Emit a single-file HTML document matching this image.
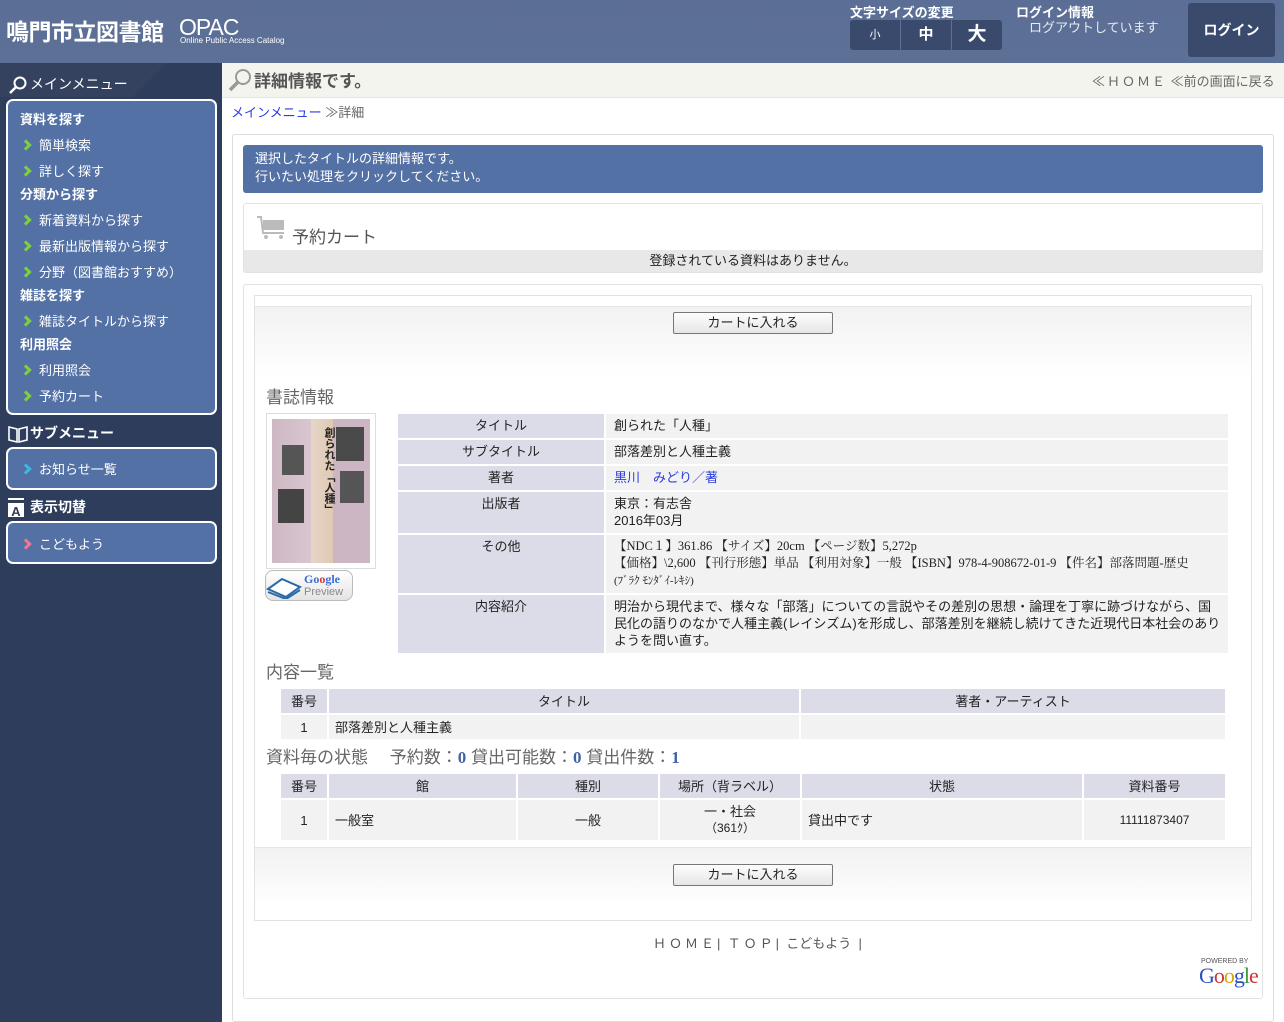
<!DOCTYPE html>
<html><head><meta charset="utf-8"><style>
*{margin:0;padding:0;box-sizing:border-box}
body{width:1284px;height:1022px;position:relative;overflow:hidden;background:#fff;font-family:"Liberation Sans","Noto Sans CJK JP",sans-serif;font-size:13px;color:#222}
.a{position:absolute}
#hdr{left:0;top:0;width:1284px;height:63px;background:linear-gradient(#5b6e95,#5d7096)}
#side{left:0;top:63px;width:222px;height:959px;background:#2f3d5d}
.box{position:absolute;left:6px;width:211px;background:#5471a5;border:2px solid #fff;border-radius:7px}
.it{position:absolute;left:12px;color:#fff;font-size:13px;white-space:nowrap;line-height:17px}
.it b{font-weight:bold}
.ch{display:inline-block;width:8px;height:8px;border-top:3px solid #7dd13b;border-right:3px solid #7dd13b;transform:rotate(45deg);margin:0 9px 1px 2px}
.sh{position:absolute;left:8px;color:#fff;font-weight:bold;font-size:14px}
table{border-collapse:separate;border-spacing:2px}
td,th{font-size:13px;font-weight:normal;line-height:17px}
.btn{position:absolute;left:673px;width:160px;height:22px;border:1px solid #777;border-radius:2px;background:linear-gradient(#fdfdfd,#e6e6e6);text-align:center;line-height:20px;font-size:13px}
.lbl{background:#dcdce8;text-align:center;vertical-align:top;padding:3px 4px 0}
.val{background:#f2f2f2;padding:3px 8px 0;vertical-align:top}
.th2{background:#dcdce8;text-align:center;height:24px;padding:0}
.td2{background:#f2f2f2;height:24px;padding:0 6px}
.h3{position:absolute;left:266px;font-size:17px;color:#666;line-height:20px}
</style></head><body>
<div id="hdr" class="a">
 <div class="a" style="left:6px;top:13px;color:#fff;font-size:23px;font-weight:bold;letter-spacing:-0.5px">鳴門市立図書館</div>
 <div class="a" style="left:179px;top:14px;color:#fff;font-size:23px;font-weight:300;letter-spacing:-1px">OPAC</div>
 <div class="a" style="left:180px;top:36px;color:#fff;font-size:8px">Online Public Access Catalog</div>
 <div class="a" style="left:850px;top:2px;color:#fff;font-size:13px;font-weight:bold">文字サイズの変更</div>
 <div class="a" style="left:850px;top:20px;width:50px;height:30px;background:#3a4a6d;border-radius:3px 0 0 3px;color:#fff;font-size:11px;text-align:center;line-height:30px">小</div>
 <div class="a" style="left:901px;top:20px;width:50px;height:30px;background:#3a4a6d;color:#fff;font-size:15px;font-weight:bold;text-align:center;line-height:30px">中</div>
 <div class="a" style="left:952px;top:20px;width:50px;height:30px;background:#3a4a6d;border-radius:0 3px 3px 0;color:#fff;font-size:19px;font-weight:bold;text-align:center;line-height:30px">大</div>
 <div class="a" style="left:1016px;top:2px;color:#fff;font-size:13px;font-weight:bold">ログイン情報</div>
 <div class="a" style="left:1029px;top:17px;color:#e8ecf4;font-size:13px">ログアウトしています</div>
 <div class="a" style="left:1188px;top:3px;width:87px;height:54px;background:#3a4a6d;border-radius:3px;color:#fff;font-size:14px;font-weight:bold;text-align:center;line-height:54px">ログイン</div>
</div>
<div id="side" class="a">
 <div class="a" style="left:0;top:0;width:222px;height:34px;background:linear-gradient(135deg,#34425f 65%,#2f3d5d 65%)"></div>
 <svg class="a" style="left:9px;top:13px" width="18" height="18" viewBox="0 0 18 18"><circle cx="11" cy="7" r="5.5" fill="none" stroke="#fff" stroke-width="2"/><line x1="7" y1="11" x2="1" y2="17" stroke="#fff" stroke-width="2.5"/></svg>
 <div class="sh" style="left:30px;top:11px;font-weight:normal">メインメニュー</div>
 <div class="box" style="top:36px;height:316px">
  <div class="it" style="top:10px"><b>資料を探す</b></div>
  <div class="it" style="top:36px"><span class="ch"></span>簡単検索</div>
  <div class="it" style="top:62px"><span class="ch"></span>詳しく探す</div>
  <div class="it" style="top:85px"><b>分類から探す</b></div>
  <div class="it" style="top:111px"><span class="ch"></span>新着資料から探す</div>
  <div class="it" style="top:137px"><span class="ch"></span>最新出版情報から探す</div>
  <div class="it" style="top:163px"><span class="ch"></span>分野（図書館おすすめ）</div>
  <div class="it" style="top:186px"><b>雑誌を探す</b></div>
  <div class="it" style="top:212px"><span class="ch"></span>雑誌タイトルから探す</div>
  <div class="it" style="top:235px"><b>利用照会</b></div>
  <div class="it" style="top:261px"><span class="ch"></span>利用照会</div>
  <div class="it" style="top:287px"><span class="ch"></span>予約カート</div>
 </div>
 <svg class="a" style="left:8px;top:362px" width="20" height="18" viewBox="0 0 20 18"><path d="M1 2 L9 4 L9 17 L1 15 Z M19 2 L11 4 L11 17 L19 15 Z" fill="none" stroke="#fff" stroke-width="1.6"/></svg>
 <div class="sh" style="left:30px;top:360px">サブメニュー</div>
 <div class="box" style="top:384px;height:43px"><div class="it" style="top:12px"><span class="ch" style="border-color:#3fb8e0"></span>お知らせ一覧</div></div>
 <div class="a" style="left:8px;top:437px;width:16px;height:17px;background:#fff;color:#2f3d5d;font-size:13px;font-weight:bold;text-align:center;line-height:18px;border-top:3px solid #2f3d5d;box-shadow:0 -2px 0 #fff">A</div>
 <div class="sh" style="left:30px;top:434px">表示切替</div>
 <div class="box" style="top:458px;height:43px"><div class="it" style="top:13px"><span class="ch" style="border-color:#f07890"></span>こどもよう</div></div>
</div>
<div class="a" style="left:222px;top:63px;width:1062px;height:35px;background:#f4f4ee;border-bottom:1px solid #e4e4e0"></div>
<svg class="a" style="left:228px;top:68px" width="24" height="24" viewBox="0 0 24 24"><circle cx="15" cy="9" r="7" fill="#f4f4ee" stroke="#999" stroke-width="2"/><line x1="10" y1="14" x2="2" y2="22" stroke="#999" stroke-width="3.5"/></svg>
<div class="a" style="left:254px;top:67px;font-size:17px;font-weight:bold;color:#555">詳細情報です。</div>
<div class="a" style="left:1092px;top:71px;font-size:13px;color:#666"><span style="letter-spacing:2px">≪ＨＯＭＥ</span> ≪前の画面に戻る</div>
<div class="a" style="left:231px;top:102px;font-size:13px"><span style="color:#2a3ee0">メインメニュー</span> <span style="color:#666">≫詳細</span></div>
<div class="a" style="left:232px;top:134px;width:1042px;height:888px;border:1px solid #ddd;border-radius:3px"></div>
<div class="a" style="left:243px;top:145px;width:1020px;height:48px;background:#5471a5;border-radius:3px;color:#fff;font-size:13px;padding:5px 12px;line-height:18px">選択したタイトルの詳細情報です。<br>行いたい処理をクリックしてください。</div>
<div class="a" style="left:243px;top:203px;width:1020px;height:70px;border:1px solid #e2e2e2;border-radius:3px"></div>
<svg class="a" style="left:256px;top:215px" width="30" height="26" viewBox="0 0 30 26"><path d="M1 2 L5 2 L7 18 L28 18" fill="none" stroke="#bbb" stroke-width="2"/><rect x="7" y="5" width="21" height="10" fill="#bbb"/><circle cx="10" cy="22" r="2" fill="#bbb"/><circle cx="25" cy="22" r="2" fill="#bbb"/></svg>
<div class="a" style="left:292px;top:223px;font-size:17px;color:#555">予約カート</div>
<div class="a" style="left:244px;top:250px;width:1018px;height:22px;background:#e8e8e8;text-align:center;line-height:22px;font-size:13px">登録されている資料はありません。</div>
<div class="a" style="left:243px;top:284px;width:1020px;height:715px;border:1px solid #e2e2e2;border-radius:3px"></div>
<div class="a" style="left:254px;top:295px;width:998px;height:626px;border:1px solid #e2e2e2"></div>
<div class="a" style="left:255px;top:306px;width:996px;height:70px;background:linear-gradient(#f2f2f2,#fff);border-top:1px solid #e6e6e6"></div>
<div class="btn" style="top:312px">カートに入れる</div>
<div class="h3" style="top:388px">書誌情報</div>
<div class="a" style="left:266px;top:413px;width:110px;height:156px;border:1px solid #ddd;background:#fff;padding:5px">
 <div style="width:98px;height:144px;background:linear-gradient(90deg,#cdb8c4 0,#d9c6d0 40%,#e6d5c8 40%,#e0c9b3 62%,#cdb6c3 62%);position:relative">
  <div style="position:absolute;left:10px;top:26px;width:22px;height:30px;background:#555"></div>
  <div style="position:absolute;left:6px;top:70px;width:26px;height:34px;background:#444"></div>
  <div style="position:absolute;left:64px;top:8px;width:28px;height:34px;background:#4a4a4a"></div>
  <div style="position:absolute;left:68px;top:52px;width:24px;height:32px;background:#555"></div>
  <div style="position:absolute;left:49px;top:8px;font-size:11px;font-weight:bold;writing-mode:vertical-rl;color:#222">創られた「人種」</div>
 </div>
</div>
<div class="a" style="left:265px;top:570px;width:88px;height:31px;border:1px solid #bbb;border-radius:8px;background:linear-gradient(#fff,#e4e4e4)">
 <svg class="a" style="left:0;top:4px" width="36" height="24" viewBox="0 0 36 24"><path d="M2 14 L16 4 L34 12 L20 22 Z" fill="#fff" stroke="#2a6aa8" stroke-width="2"/><path d="M2 17 L20 24 L34 15" fill="none" stroke="#2a6aa8" stroke-width="2"/></svg>
 <div class="a" style="left:38px;top:1px;font-size:12px;font-weight:bold;color:#3a6fd8;font-family:'Liberation Serif',serif">Go<span style="color:#d33">o</span>gle</div>
 <div class="a" style="left:38px;top:15px;font-size:11px;color:#888">Preview</div>
</div>
<table class="a" style="left:396px;top:412px;width:834px;table-layout:fixed">
 <tr><td class="lbl" style="width:206px;height:24px">タイトル</td><td class="val">創られた「人種」</td></tr>
 <tr><td class="lbl" style="height:24px">サブタイトル</td><td class="val">部落差別と人種主義</td></tr>
 <tr><td class="lbl" style="height:24px">著者</td><td class="val" style="color:#2a3ee0">黒川　みどり／著</td></tr>
 <tr><td class="lbl" style="height:41px">出版者</td><td class="val">東京：有志舎<br>2016年03月</td></tr>
 <tr><td class="lbl" style="height:58px">その他</td><td class="val" style="font-family:'Liberation Serif','Noto Serif CJK SC',serif;font-size:12.5px;line-height:17px">【NDC１】361.86 【サイズ】20cm 【ページ数】5,272p<br>【価格】\2,600 【刊行形態】単品 【利用対象】一般 【ISBN】978-4-908672-01-9 【件名】部落問題-歴史<br><span style="font-size:11px">(ﾌﾞﾗｸ ﾓﾝﾀﾞｲ-ﾚｷｼ)</span></td></tr>
 <tr><td class="lbl" style="height:58px">内容紹介</td><td class="val" style="padding-right:4px">明治から現代まで、様々な「部落」についての言説やその差別の思想・論理を丁寧に跡づけながら、国民化の語りのなかで人種主義(レイシズム)を形成し、部落差別を継続し続けてきた近現代日本社会のありようを問い直す。</td></tr>
</table>
<div class="h3" style="top:663px">内容一覧</div>
<table class="a" style="left:279px;top:687px;width:948px">
 <tr><td class="th2" style="width:46px">番号</td><td class="th2" style="width:470px">タイトル</td><td class="th2">著者・アーティスト</td></tr>
 <tr><td class="td2" style="text-align:center">1</td><td class="td2">部落差別と人種主義</td><td class="td2"></td></tr>
</table>
<div class="h3" style="top:748px">資料毎の状態　 予約数：<b style="color:#4060a8;font-family:'Liberation Serif',serif">0</b> 貸出可能数：<b style="color:#4060a8;font-family:'Liberation Serif',serif">0</b> 貸出件数：<b style="color:#4060a8;font-family:'Liberation Serif',serif">1</b></div>
<table class="a" style="left:279px;top:772px;width:948px">
 <tr><td class="th2" style="width:46px">番号</td><td class="th2" style="width:187px">館</td><td class="th2" style="width:140px">種別</td><td class="th2" style="width:140px">場所（背ラベル）</td><td class="th2" style="width:280px">状態</td><td class="th2">資料番号</td></tr>
 <tr><td class="td2" style="text-align:center;height:40px">1</td><td class="td2">一般室</td><td class="td2" style="text-align:center">一般</td><td class="td2" style="text-align:center;line-height:16px">一・社会<br><span style="font-size:12px">（361ｸ）</span></td><td class="td2">貸出中です</td><td class="td2" style="text-align:center;font-size:12px">11111873407</td></tr>
</table>
<div class="a" style="left:255px;top:847px;width:996px;height:60px;background:linear-gradient(#f2f2f2,#fff);border-top:1px solid #e6e6e6"></div>
<div class="btn" style="top:864px">カートに入れる</div>
<div class="a" style="left:653px;top:933px;font-size:13px;color:#555"><span style="letter-spacing:3px">ＨＯＭＥ</span>|&nbsp; <span style="letter-spacing:3px">ＴＯＰ</span>|&nbsp; こどもよう &nbsp;|</div>
<div class="a" style="left:1201px;top:958px;font-size:7px;color:#555">POWERED BY</div>
<div class="a" style="left:1199px;top:963px;font-size:22px;font-family:'Liberation Serif',serif;letter-spacing:-1px"><span style="color:#2a4fc8">G</span><span style="color:#c33">o</span><span style="color:#d9a400">o</span><span style="color:#2a4fc8">g</span><span style="color:#3a9a3a">l</span><span style="color:#c33">e</span></div>
</body></html>
